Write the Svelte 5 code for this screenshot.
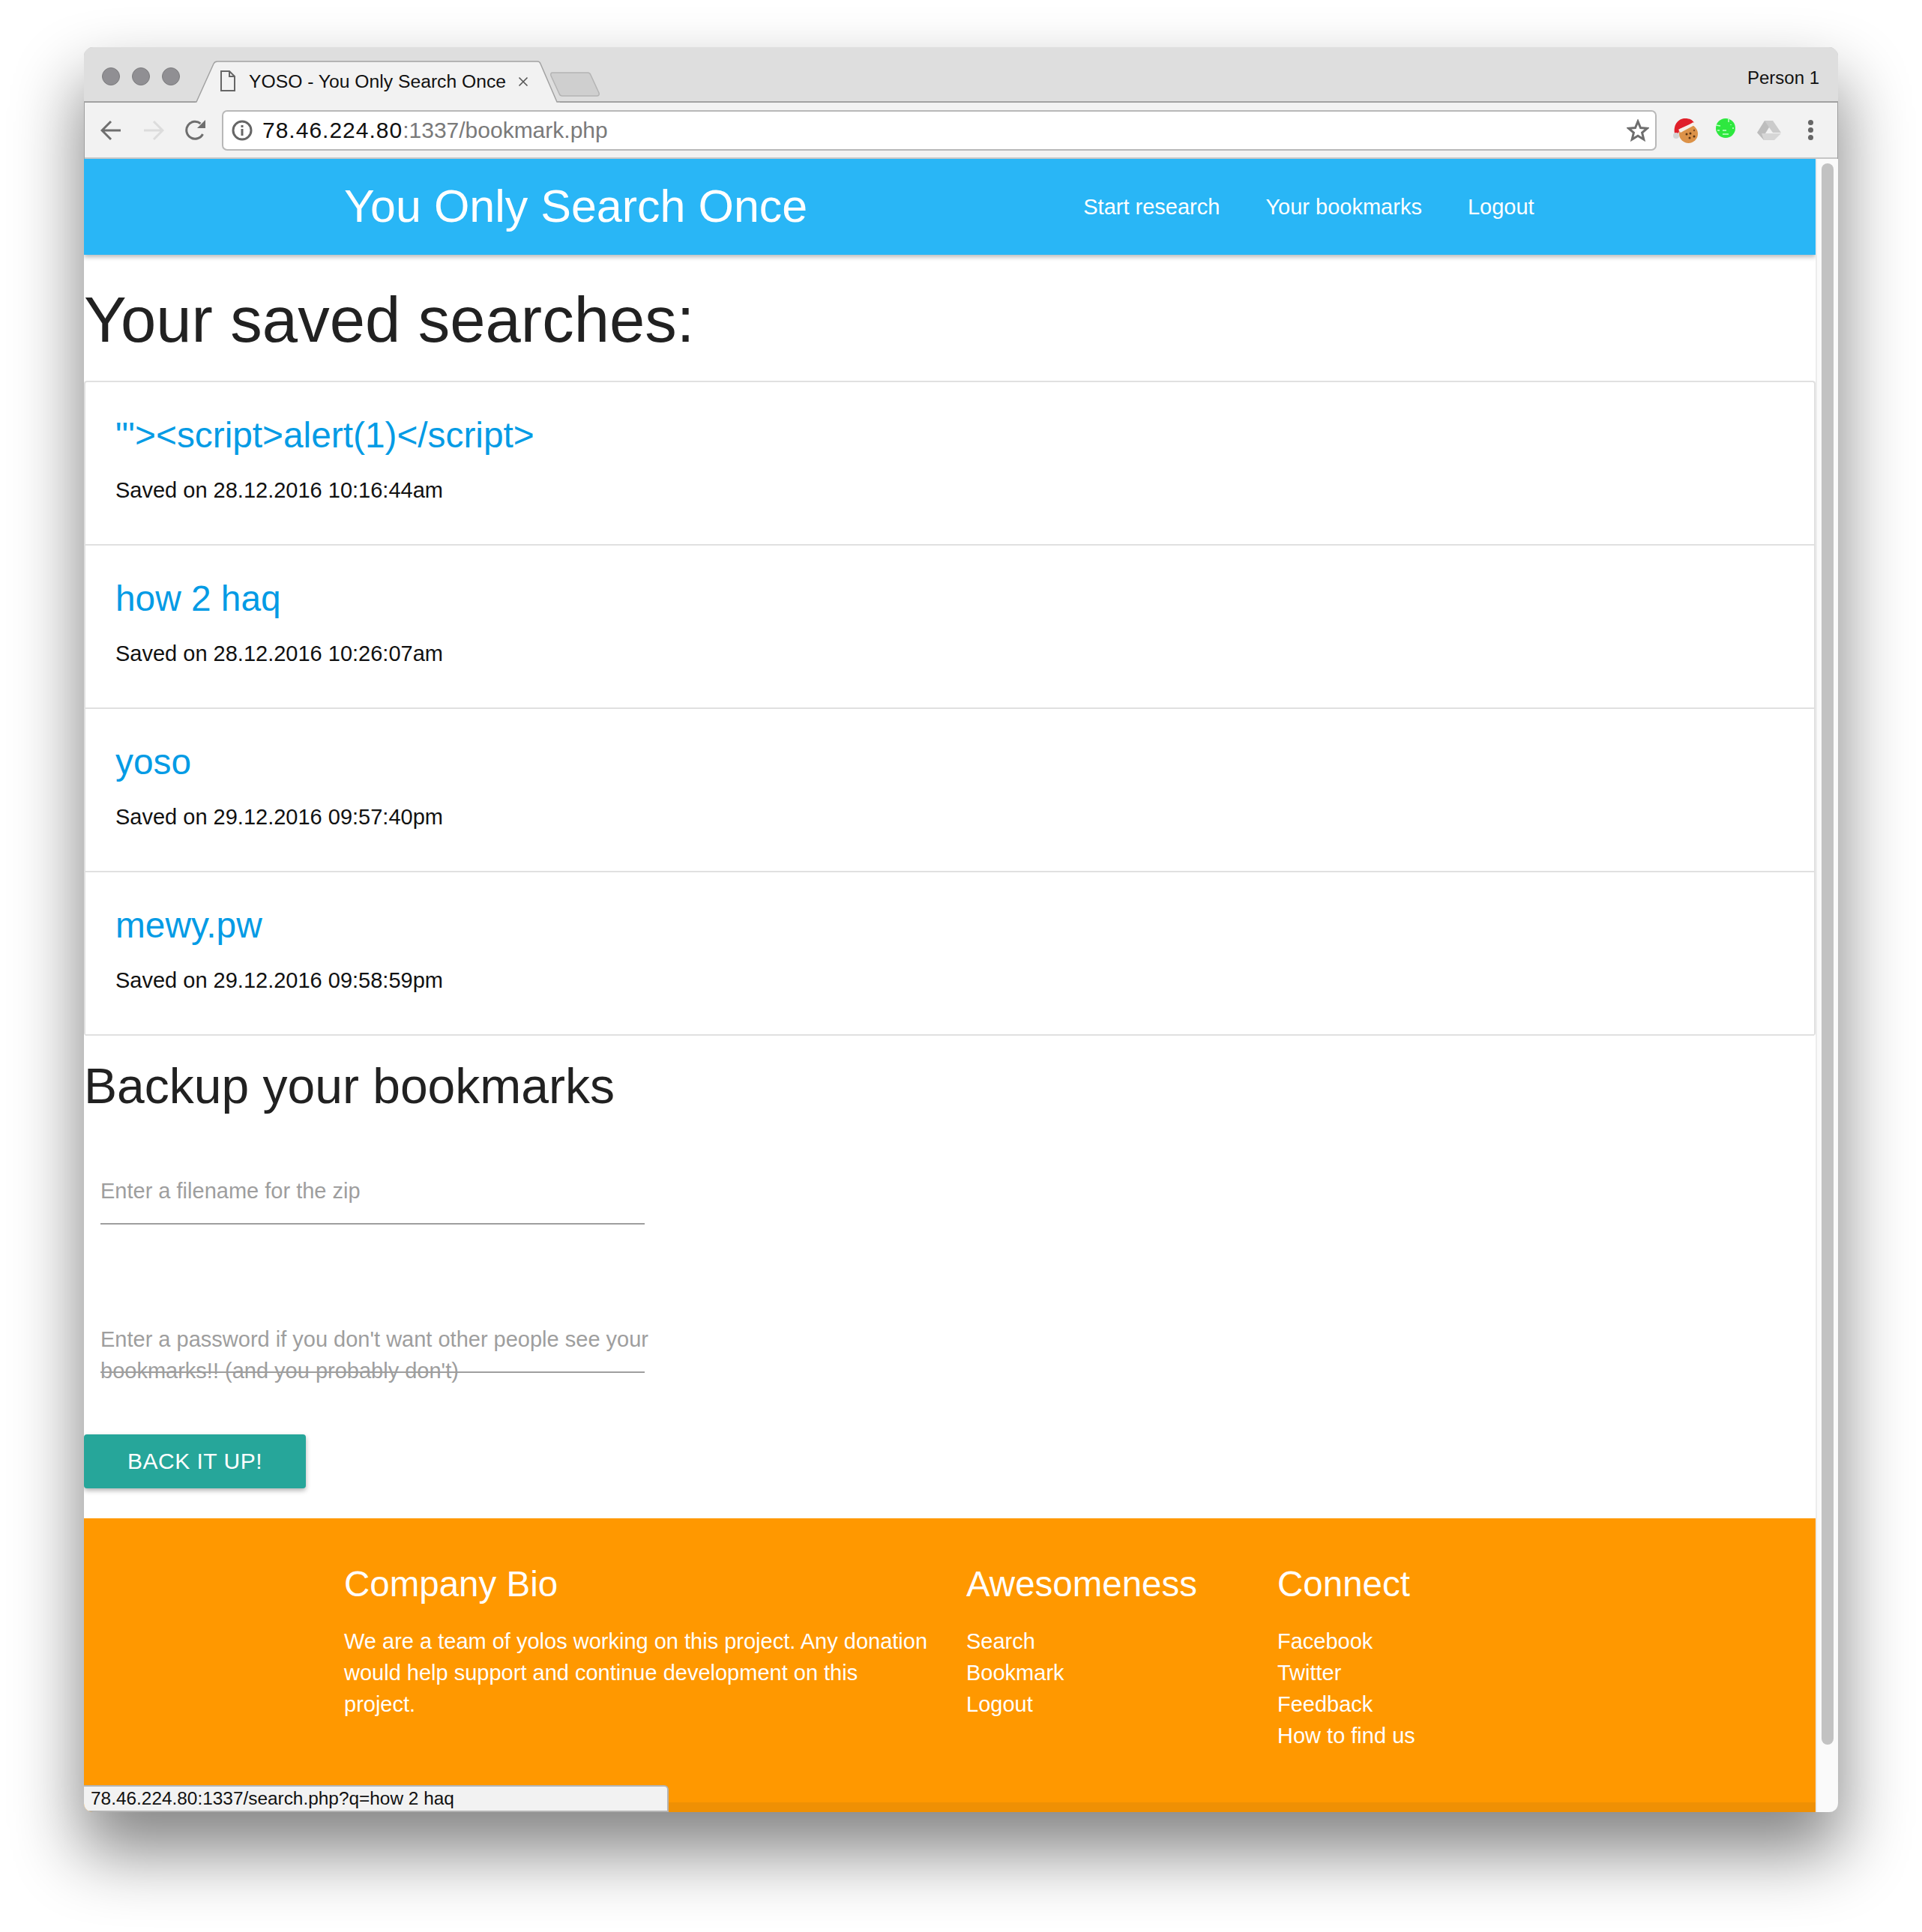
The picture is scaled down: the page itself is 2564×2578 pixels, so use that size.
<script>
  const searches = [
    { q: '"\'><script>alert(1)</' + 'script>', saved: '28.12.2016 10:16:44am' },
    { q: 'how 2 haq', saved: '28.12.2016 10:26:07am' },
    { q: 'yoso', saved: '29.12.2016 09:57:40pm' },
    { q: 'mewy.pw', saved: '29.12.2016 09:58:59pm' }
  ];
  const navLinks = ['Start research', 'Your bookmarks', 'Logout'];
  const awesome = ['Search', 'Bookmark', 'Logout'];
  const connect = ['Facebook', 'Twitter', 'Feedback', 'How to find us'];
</script>

<div class="window">
  <div class="tabstrip">
    <div class="lights"><i></i><i></i><i></i></div>
    <div class="tab">
      <svg class="tab-bg" width="486" height="56" viewBox="0 0 486 56">
        <path d="M0 55 L1 55 L24 4 Q25.500 1 29 1 L456 1 Q459 1 460 4 L482 55 L486 55 L486 56 L0 56 Z" fill="#f2f2f2" stroke="none" />
        <path d="M0 55 L1 55 L24 4 Q25.500 1 29 1 L456 1 Q459 1 460 4 L482 55 L486 55" fill="none" stroke="#a2a2a2" stroke-width="1.500" />
      </svg>
      <svg class="page-icon" width="20" height="28" viewBox="0 0 20 28">
        <path d="M1 1 H12 L19 8 V27 H1 Z M12 1 V8 H19" fill="none" stroke="#666" stroke-width="2" />
      </svg>
      <span class="tab-title">YOSO - You Only Search Once</span>
      <svg class="tab-x" width="14" height="14" viewBox="0 0 14 14">
        <path d="M1.500 1.500 L12.500 12.500 M12.500 1.500 L1.500 12.500" stroke="#555" stroke-width="1.600" />
      </svg>
    </div>
    <svg class="newtab" width="66" height="33" viewBox="0 0 66 33">
      <path d="M3 1 H50 Q53 1 54 4 L65 28 Q66 32 62 32 H16 Q13 32 12 29 L1 5 Q0 1 3 1 Z" fill="#cfcfcf" stroke="#b4b4b4" stroke-width="1.500" />
    </svg>
    <span class="person">Person 1</span>
  </div>

  <div class="toolbar">
    <svg class="tool back" width="28" height="28" viewBox="0 0 28 28">
      <path d="M27 14 H3 M14 2 L2 14 L14 26" fill="none" stroke="#6e6e6e" stroke-width="3" />
    </svg>
    <svg class="tool fwd" width="28" height="28" viewBox="0 0 28 28">
      <path d="M1 14 H25 M14 2 L26 14 L14 26" fill="none" stroke="#dcdcdc" stroke-width="3" />
    </svg>
    <svg class="tool reload" width="28" height="28" viewBox="0 0 28 28">
      <path d="M23.500 19 A11.500 11.500 0 1 1 20.500 4.800" fill="none" stroke="#6e6e6e" stroke-width="3" />
      <path d="M27 0 V11 H16 Z" fill="#6e6e6e" />
    </svg>
    <div class="omnibox">
      <svg width="28" height="28" viewBox="0 0 28 28">
        <circle cx="14" cy="14" r="12" fill="none" stroke="#666" stroke-width="3" />
        <rect x="12.500" y="7" width="3" height="3" fill="#666" />
        <rect x="12.500" y="12" width="3" height="9" fill="#666" />
      </svg>
      <span class="url"><b>78.46.224.80</b>:1337/bookmark.php</span>
      <svg class="star" width="30" height="30" viewBox="0 0 30 30">
        <path d="M15 3 L18.500 11.500 L27.500 12.200 L20.600 18.100 L22.800 27 L15 22.200 L7.200 27 L9.400 18.100 L2.500 12.200 L11.500 11.500 Z" fill="none" stroke="#6e6e6e" stroke-width="3" />
      </svg>
    </div>
    <div class="exts">
      <svg width="34" height="34" viewBox="0 0 34 34">
        <circle cx="20.500" cy="21.500" r="12.500" fill="#dc9248" />
        <circle cx="18" cy="22" r="1.500" fill="#5a3414" />
        <circle cx="23" cy="21" r="1.500" fill="#5a3414" />
        <circle cx="22" cy="27" r="1.500" fill="#5a3414" />
        <circle cx="28" cy="25" r="1.500" fill="#5a3414" />
        <circle cx="28" cy="17" r="1.200" fill="#7a4a20" />
        <path d="M2 21 C0 8 8 1 16 1 C22 1 26 3 28 7 L9 15 L7 21 Z" fill="#e0202a" />
        <path d="M7 16 C13 13 22 9 27 6 L30 9 C24 13 16 16 10 20 Z" fill="#f6f1ea" />
        <circle cx="4" cy="24" r="4" fill="#d4d4d4" />
      </svg>
      <svg class="green" width="28" height="28" viewBox="0 0 28 28">
        <circle cx="14" cy="15" r="13" fill="#2ee83f" />
        <path d="M18 1 V7 M1 11 L7 12 M6 18 L3 18 M10 23 H18 M10 18 H15 M24 14 V16 M21 10 V11" stroke="#c8ffcb" stroke-width="1.500" fill="none" />
      </svg>
      <svg class="drive" width="32" height="26" viewBox="0 0 32 26">
        <path d="M10 0 H16 L21 9 L16 9 L11 17 L9 26 L0 16 Z" fill="#bdbdbd" />
        <path d="M10 0 H21 L32 16 H21 L16 9 Z" fill="#cbcbcb" />
        <path d="M6 17 H32 L23 26 H9 Z" fill="#d6d6d6" />
      </svg>
      <div class="dots"><i></i><i></i><i></i></div>
    </div>
  </div>

  <div class="viewport">
    <div class="page">
      <nav class="topnav">
        <span class="brand">You Only Search Once</span>
        <div class="navlinks">
          {#each navLinks as l}
            <span>{l}</span>
          {/each}
        </div>
      </nav>

      <h1>Your saved searches:</h1>

      <ul class="collection">
        {#each searches as s}
          <li>
            <div class="query">{s.q}</div>
            <p>Saved on {s.saved}</p>
          </li>
        {/each}
      </ul>

      <h2>Backup your bookmarks</h2>

      <div class="field first">
        <input type="text" />
        <label for="">Enter a filename for the zip</label>
      </div>
      <div class="field second">
        <input type="password" />
        <label for="">Enter a password if you don't want other people see your bookmarks!! (and you probably don't)</label>
      </div>

      <button class="backup">BACK IT UP!</button>

      <footer>
        <div class="cols">
          <div>
            <h5>Company Bio</h5>
            <p class="bio">We are a team of yolos working on this project. Any donation would help support and continue development on this project.</p>
          </div>
          <div>
            <h5>Awesomeness</h5>
            {#each awesome as a}
              <div class="flink">{a}</div>
            {/each}
          </div>
          <div>
            <h5>Connect</h5>
            {#each connect as c}
              <div class="flink">{c}</div>
            {/each}
          </div>
        </div>
        <div class="copyright"></div>
      </footer>
    </div>
    <div class="scrollbar"><div class="thumb"></div></div>
    <div class="statusbar">78.46.224.80:1337/search.php?q=how 2 haq</div>
  </div>
</div>

<style>
  :global(body) {
    margin: 0;
    background: #fff;
    font-family: "Liberation Sans", Arial, sans-serif;
  }
  .window {
    position: relative;
    box-sizing: border-box;
    margin: 63px 0 160px 112px;
    width: 2340px;
    height: 2355px;
    display: flex;
    flex-direction: column;
    border-radius: 12px;
    overflow: hidden;
    outline: 1px solid #a0a0a0;
    outline-offset: -1px;
    box-shadow: 0 50px 90px 4px rgba(0, 0, 0, 0.48);
  }
  .tabstrip {
    position: relative;
    height: 74px;
    flex: none;
    box-sizing: border-box;
    background: #dedede;
    border-bottom: 2px solid #a2a2a2;
    display: flex;
    align-items: flex-start;
  }
  .lights {
    display: flex;
    gap: 16px;
    margin: 27px 0 0 24px;
  }
  .lights i {
    display: block;
    width: 22px;
    height: 22px;
    border-radius: 50%;
    background: #908f93;
    border: 1px solid #7c7c7e;
  }
  .tab {
    position: relative;
    width: 486px;
    height: 56px;
    margin: 18px 0 0 21px;
    display: flex;
    align-items: center;
    flex: none;
  }
  .tab-bg {
    position: absolute;
    left: 0;
    top: 0;
  }
  .page-icon {
    position: relative;
    margin-left: 33px;
    margin-top: -2px;
  }
  .tab-title {
    position: relative;
    margin-left: 18px;
    font-size: 24.700px;
    color: #111;
    white-space: nowrap;
  }
  .tab-x {
    position: relative;
    margin-left: 16px;
  }
  .newtab {
    margin: 33px 0 0 -13px;
    flex: none;
  }
  .person {
    position: absolute;
    right: 25px;
    top: 27px;
    font-size: 24px;
    line-height: 28px;
    color: #111;
  }
  .toolbar {
    height: 75px;
    flex: none;
    box-sizing: border-box;
    background: #f2f2f2;
    border-bottom: 2px solid #c6c6c6;
    display: flex;
    align-items: center;
  }
  .tool {
    flex: none;
  }
  .back {
    margin-left: 22px;
  }
  .fwd {
    margin-left: 29px;
  }
  .reload {
    margin-left: 28px;
  }
  .omnibox {
    box-sizing: border-box;
    width: 1914px;
    height: 54px;
    margin: 1px 0 0 21px;
    flex: none;
    background: #fff;
    border: 2px solid #b8b8b8;
    border-radius: 7px;
    display: flex;
    align-items: center;
    padding: 0 8px 0 11px;
  }
  .url {
    margin-left: 13px;
    font-size: 30px;
    color: #7a7a7a;
    white-space: nowrap;
  }
  .url b {
    font-weight: 400;
    color: #111;
    letter-spacing: 1px;
  }
  .star {
    margin-left: auto;
  }
  .exts {
    display: flex;
    align-items: center;
    margin-left: 22px;
  }
  .green {
    margin-left: 22px;
    margin-top: -8px;
  }
  .drive {
    margin-left: 28px;
  }
  .dots {
    display: flex;
    flex-direction: column;
    gap: 3px;
    margin-left: 36px;
  }
  .dots i {
    display: block;
    width: 7px;
    height: 7px;
    border-radius: 50%;
    background: #666;
  }
  .viewport {
    position: relative;
    flex: 1;
    min-height: 0;
    display: flex;
    overflow: hidden;
  }
  .page {
    width: 2310px;
    flex: none;
    background: #fff;
    overflow: hidden;
  }
  .scrollbar {
    flex: 1;
    box-sizing: border-box;
    background: #fafafa;
    border-left: 2px solid #ececec;
    padding: 6px 6px 0 6px;
  }
  .thumb {
    width: 16px;
    height: 2110px;
    border-radius: 8px;
    background: #c2c2c2;
  }
  .topnav {
    height: 128px;
    background: #29b6f6;
    box-shadow: 0 3px 6px rgba(0, 0, 0, 0.28);
    display: flex;
    align-items: center;
    padding-left: 347px;
    color: #fff;
  }
  .brand {
    font-size: 61px;
    white-space: nowrap;
    margin-top: -3px;
  }
  .navlinks {
    display: flex;
    gap: 61px;
    margin-left: 368px;
    font-size: 29px;
  }
  h1 {
    margin: 41px 0 35px;
    font-size: 85px;
    line-height: 92px;
    font-weight: 400;
    color: #212121;
  }
  .collection {
    list-style: none;
    margin: 0;
    padding: 0;
    border: 2px solid #e0e0e0;
    border-bottom: 0;
    border-radius: 4px;
  }
  .collection li {
    box-sizing: border-box;
    height: 218px;
    padding: 43px 40px 0;
    border-bottom: 2px solid #e0e0e0;
  }
  .query {
    font-size: 47.800px;
    line-height: 56px;
    color: #039be5;
  }
  .collection p {
    margin: 24px 0 0;
    font-size: 29px;
    line-height: 42px;
    color: #111;
  }
  h2 {
    margin: 31px 0 0;
    font-size: 66px;
    line-height: 73px;
    padding-bottom: 2px;
    font-weight: 400;
    color: #212121;
  }
  .field {
    position: relative;
    margin-left: 22px;
    width: 726px;
  }
  .field.first {
    margin-top: 80px;
  }
  .field.second {
    margin-top: 132px;
  }
  .field input {
    display: block;
    box-sizing: border-box;
    width: 100%;
    height: 66px;
    border: 0;
    border-bottom: 2px solid #9e9e9e;
    background: transparent;
    outline: none;
    padding: 0;
  }
  .field label {
    position: absolute;
    left: 0;
    top: 0;
    width: 745px;
    font-size: 29px;
    line-height: 42px;
    color: #9e9e9e;
  }
  .backup {
    display: block;
    margin: 82px 0 40px;
    width: 296px;
    height: 72px;
    border: 0;
    border-radius: 4px;
    background: #26a69a;
    color: #fff;
    font-family: inherit;
    font-size: 30px;
    letter-spacing: 0.5px;
    box-shadow: 0 3px 6px rgba(0, 0, 0, 0.3);
  }
  footer {
    background: #ff9800;
    color: #fff;
  }
  .cols {
    display: grid;
    grid-template-columns: 830px 415px 1fr;
    padding: 60px 0 68px 347px;
  }
  h5 {
    margin: 0 0 27px;
    font-size: 47.500px;
    line-height: 56px;
    font-weight: 400;
  }
  .bio {
    margin: 0;
    width: 785px;
    font-size: 29px;
    line-height: 42px;
  }
  .flink {
    font-size: 29px;
    line-height: 42px;
  }
  .copyright {
    height: 60px;
    background: rgba(51, 51, 51, 0.08);
  }
  .statusbar {
    position: absolute;
    left: 0;
    bottom: 0;
    box-sizing: border-box;
    width: 780px;
    height: 36px;
    background: #f2f2f2;
    border: 2px solid #b4b4b4;
    border-left: 0;
    border-top-right-radius: 6px;
    padding-left: 9px;
    font-size: 24.400px;
    line-height: 32px;
    color: #111;
  }
</style>
